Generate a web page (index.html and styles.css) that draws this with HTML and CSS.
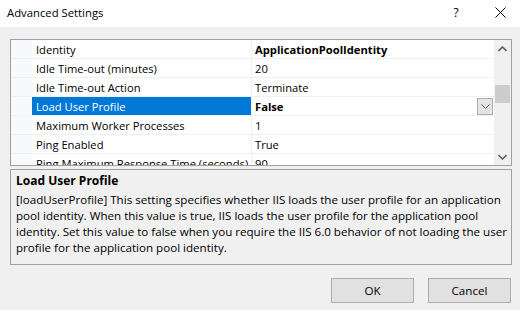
FILE: index.html
```html
<!DOCTYPE html>
<html>
<head>
<meta charset="utf-8">
<link rel="stylesheet" href="styles.css">
</head>
<body>
<div class="window">
  <div class="titlebar">
    <span class="title">Advanced Settings</span>
    <span class="help">?</span>
    <span class="close">
      <svg width="11" height="11" viewBox="0 0 11 11"><path d="M0.5 0.5 L10.5 10.5 M10.5 0.5 L0.5 10.5" stroke="#000" stroke-width="1" fill="none"/></svg>
    </span>
  </div>
  <div class="content">
    <div class="grid">
      <div class="rows">
        <div class="row"><div class="gutter"></div><div class="name">Identity</div><div class="value bold">ApplicationPoolIdentity</div></div>
        <div class="row"><div class="gutter"></div><div class="name">Idle Time-out (minutes)</div><div class="value">20</div></div>
        <div class="row"><div class="gutter"></div><div class="name">Idle Time-out Action</div><div class="value">Terminate</div></div>
        <div class="row selected"><div class="gutter"></div><div class="name">Load User Profile</div><div class="value bold">False<span class="dropbtn"><svg width="9" height="5" viewBox="0 0 9 5"><path d="M0.5 0.5 L4.5 4.5 L8.5 0.5" stroke="#555" fill="none"/></svg></span></div></div>
        <div class="row"><div class="gutter"></div><div class="name">Maximum Worker Processes</div><div class="value">1</div></div>
        <div class="row"><div class="gutter"></div><div class="name">Ping Enabled</div><div class="value">True</div></div>
        <div class="row"><div class="gutter"></div><div class="name">Ping Maximum Response Time (seconds)</div><div class="value">90</div></div>
      </div>
      <div class="scrollbar">
        <div class="arrow"><svg width="9" height="6" viewBox="0 0 9 6"><path d="M0.5 5 L4.5 1 L8.5 5" stroke="#606060" stroke-width="1.6" fill="none"/></svg></div>
        <div class="track"><div class="thumb"></div></div>
        <div class="arrow"><svg width="9" height="6" viewBox="0 0 9 6"><path d="M0.5 1 L4.5 5 L8.5 1" stroke="#606060" stroke-width="1.6" fill="none"/></svg></div>
      </div>
    </div>
    <div class="desc">
      <div class="desc-title">Load User Profile</div>
      <div class="desc-text">[loadUserProfile] This setting specifies whether IIS loads the user profile for an application pool identity. When this value is true, IIS loads the user profile for the application pool identity. Set this value to false when you require the IIS 6.0 behavior of not loading the user profile for the application pool identity.</div>
    </div>
    <div class="buttons">
      <button class="btn">OK</button>
      <button class="btn">Cancel</button>
    </div>
  </div>
</div>
</body>
</html>
```

FILE: styles.css
```css
* { box-sizing: border-box; }
html, body { margin: 0; padding: 0; }
body {
  width: 520px;
  height: 310px;
  overflow: hidden;
  background: #f0f0f0;
  font-family: "Open Sans", "Noto Sans", sans-serif;
  font-size: 11.2px;
  color: #000;
}
.window { width: 520px; height: 310px; display: flex; flex-direction: column; }
.titlebar {
  height: 27px;
  background: #fff;
  display: flex;
  align-items: center;
  padding-left: 7px;
  padding-bottom: 3px;
  flex: none;
}
.title { flex: 1; font-size: 11.3px; }
.help { width: 20px; margin-right: 29px; text-align: center; font-size: 12px; }
.close { width: 11px; height: 11px; margin-right: 14px; display: flex; }
.content {
  flex: 1;
  padding: 12px 8px 0 10px;
  display: flex;
  flex-direction: column;
}
.grid {
  height: 127px;
  border: 1px solid #a0a0a0;
  background: #fff;
  display: flex;
  flex: none;
}
.rows { flex: 1; overflow: hidden; }
.row {
  height: 19px;
  display: flex;
  border-bottom: 1px solid #f0f0f0;
  line-height: 17px;
}
.gutter { width: 21px; background: #f7f9fc; flex: none; }
.name {
  width: 220px;
  flex: none;
  padding-left: 4px;
  padding-top: 1px;
  white-space: nowrap;
  overflow: hidden;
  border-right: 1px solid #f0f0f0;
}
.value {
  flex: 1;
  padding-left: 3px;
  padding-top: 1px;
  white-space: nowrap;
  overflow: hidden;
  display: flex;
  align-items: center;
}
.bold { font-weight: bold; }
.selected .name { background: #0078d7; color: #fff; }
.dropbtn {
  margin-left: auto;
  margin-right: 1px;
  margin-top: -1px;
  width: 16px;
  height: 17px;
  background: #e5e5e5;
  border: 1px solid #adadad;
  display: flex;
  align-items: center;
  justify-content: center;
}
.scrollbar {
  width: 17px;
  flex: none;
  background: #f0f0f0;
  display: flex;
  flex-direction: column;
}
.arrow {
  height: 17px;
  display: flex;
  align-items: center;
  justify-content: center;
  flex: none;
}
.track { flex: 1; padding-top: 28px; }
.thumb { height: 18px; background: #cdcdcd; margin: 0 1px; }
.desc {
  margin-top: 3px;
  height: 96px;
  border: 1px solid #a0a0a0;
  padding: 2px 2px 0 5px;
  flex: none;
}
.desc-title { font-weight: bold; font-size: 12px; line-height: 17px; margin-bottom: 3px; }
.desc-text { font-size: 11.6px; line-height: 16px; }
.buttons {
  display: flex;
  justify-content: flex-end;
  gap: 14px;
  margin-top: 13px;
  padding-right: 1px;
}
.btn {
  width: 83px;
  height: 25px;
  background: #e1e1e1;
  border: 1px solid #adadad;
  font-family: inherit;
  font-size: 11.6px;
  color: #000;
  padding: 0;
}
```
